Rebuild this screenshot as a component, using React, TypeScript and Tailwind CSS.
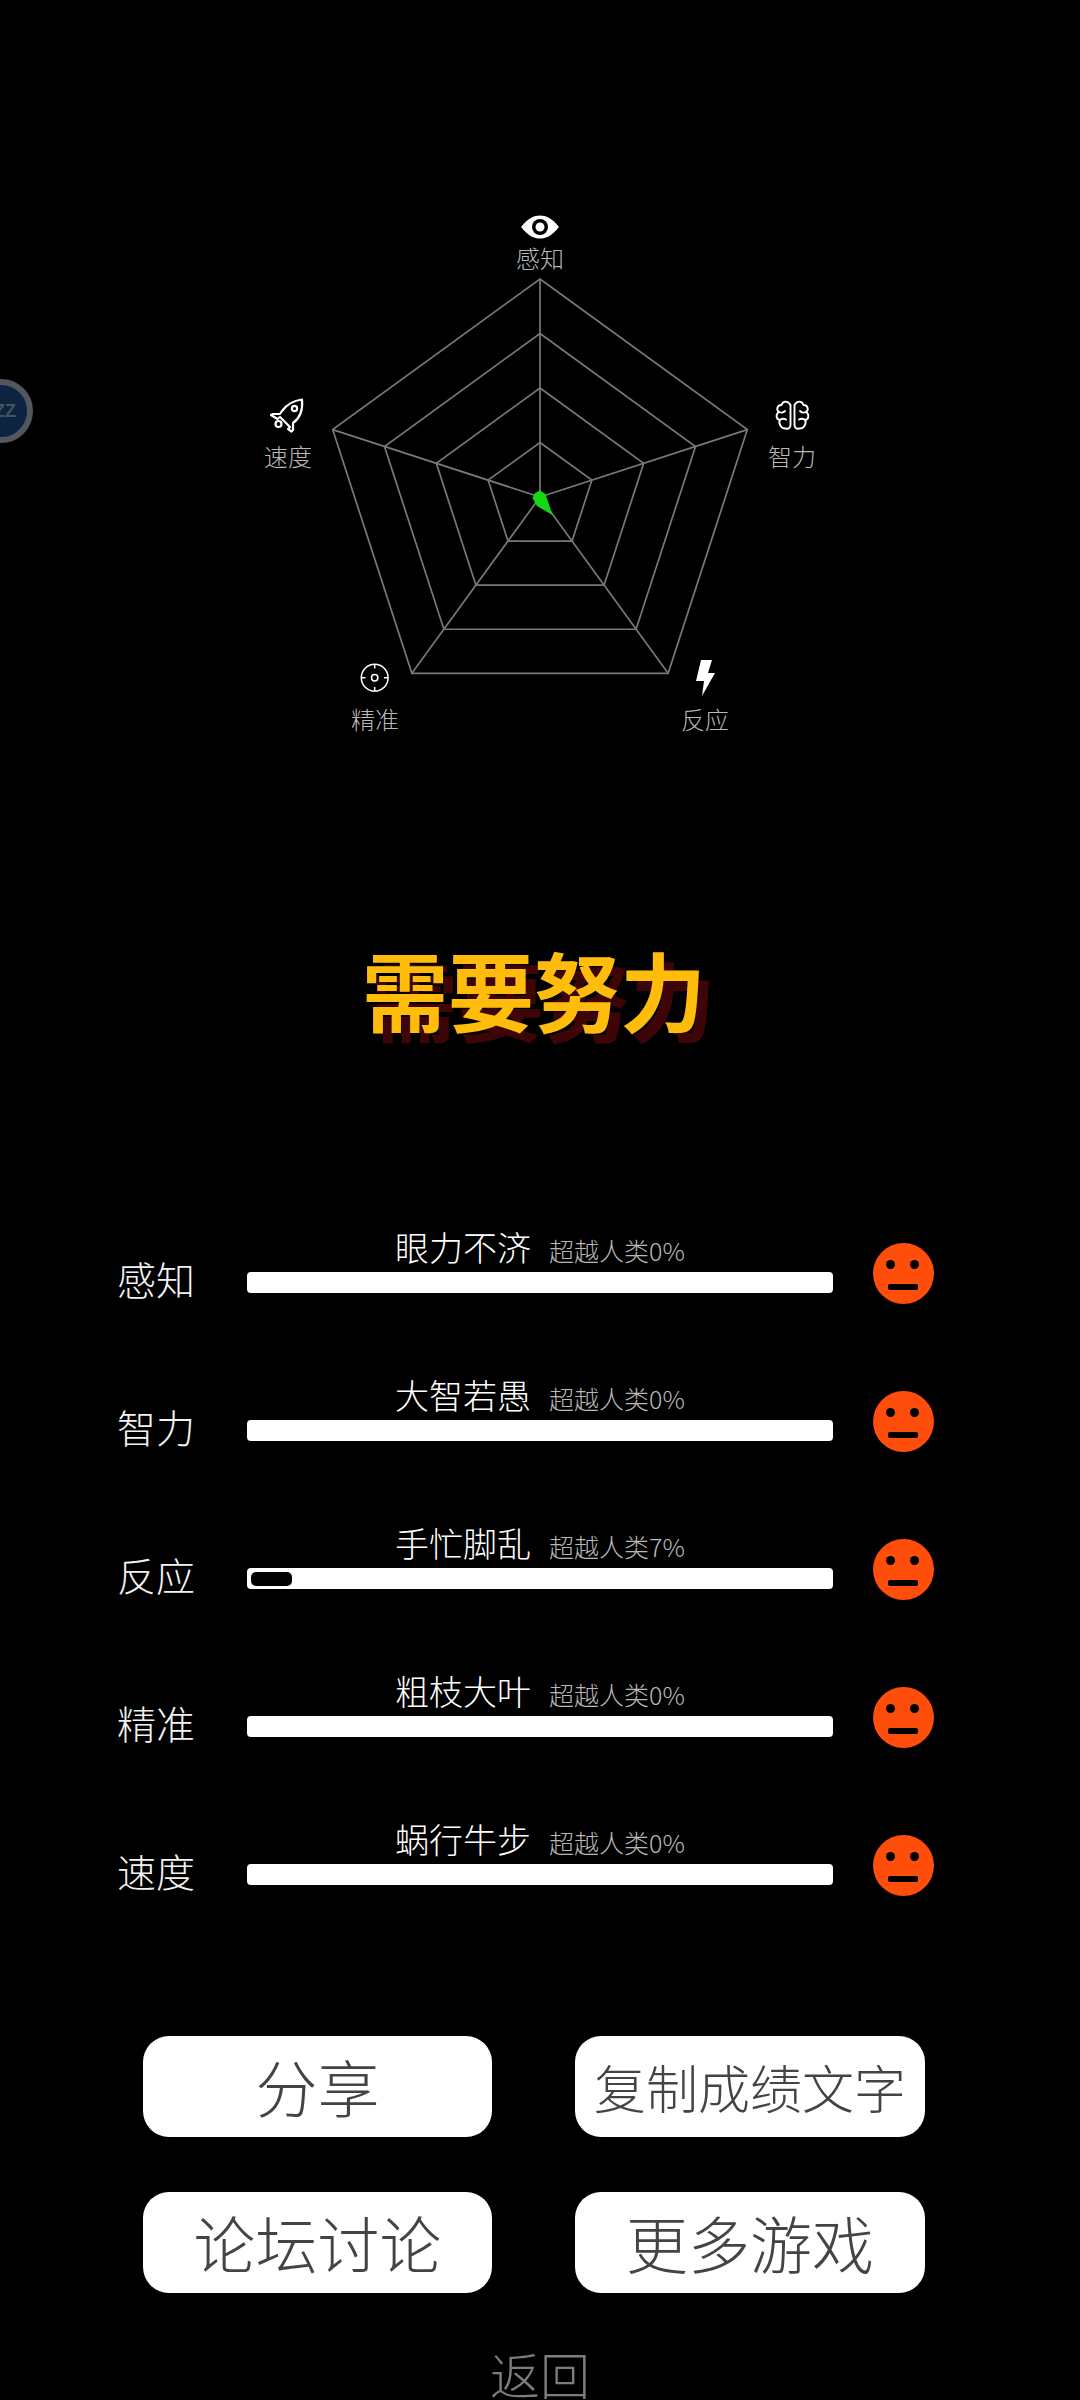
const CJK = "[font-family:'Noto_Sans_CJK_SC','Noto_Sans',sans-serif]";

const cx = 300;
const cy = 307;
const R = 218;
const pt = (i: number, r: number) => {
  const a = (-90 + i * 72) * (Math.PI / 180);
  return [cx + r * Math.cos(a), cy + r * Math.sin(a)];
};

function Radar() {
  const rings = [0.25, 0.5, 0.75, 1];
  return (
    <svg className="absolute inset-0" width="600" height="560" viewBox="0 0 600 560">
      {rings.map((f) => (
        <polygon
          key={f}
          points={[0, 1, 2, 3, 4].map((i) => pt(i, R * f).join(",")).join(" ")}
          fill="none"
          stroke="#787878"
          strokeWidth="1.7"
        />
      ))}
      {[0, 1, 2, 3, 4].map((i) => {
        const [x, y] = pt(i, R);
        return <line key={i} x1={cx} y1={cy} x2={x} y2={y} stroke="#787878" strokeWidth="1.7" />;
      })}
      <polygon points="300,300.5 305.5,304 312.5,325 297,316 292.5,308 295,303" fill="#14d814" />
    </svg>
  );
}

function Eye() {
  return (
    <svg className="absolute left-[280px] top-[24px]" width="40" height="26" viewBox="0 0 40 26">
      <path d="M1 13 C8 4 14 1.5 20 1.5 C26 1.5 32 4 39 13 C32 22 26 24.5 20 24.5 C14 24.5 8 22 1 13 Z" fill="#fff" />
      <circle cx="20" cy="13" r="8" fill="#000" />
      <circle cx="20" cy="13" r="4.5" fill="#fff" />
    </svg>
  );
}

function RocketIcon() {
  return (
    <svg className="absolute left-[10px] top-[195px]" width="90" height="90" viewBox="0 0 90 90" fill="none" stroke="#fff" strokeWidth="2.2" strokeLinejoin="round" strokeLinecap="round">
      <path d="M53 14.5 C45 15.5 38 19 33 26 L31 29 L24 29 L22 30 L28.5 34 L31 32 L41 42 L39 44 L42.5 46.5 L44 45 L44 38 C51 33 54 25 53 14.5 Z" transform="translate(-1 0)" />
      <circle cx="44.5" cy="23.5" r="2.6" />
      <circle cx="28.5" cy="39" r="3" />
    </svg>
  );
}

function BrainIcon() {
  return (
    <svg className="absolute left-[510px] top-[195px]" width="90" height="90" viewBox="0 0 90 90" fill="none" stroke="#fff" strokeWidth="1.9" strokeLinecap="round" strokeLinejoin="round">
      <path d="M40.5 20 C38 15.5 33 15.5 31.5 20 C27 20 26 25 29 27 C25.5 29 26 34 29.5 35 C28.5 40 32 44 36 43.5 C38.5 44.5 40.5 42.5 40.5 40 Z" />
      <path d="M44.5 20 C47 15.5 52 15.5 53.5 20 C58 20 59 25 56 27 C59.5 29 59 34 55.5 35 C56.5 40 53 44 49 43.5 C46.5 44.5 44.5 42.5 44.5 40 Z" />
      <path d="M29 27 C31 28 33.5 27.5 35 26" />
      <path d="M56 27 C54 28 51.5 27.5 50 26" />
      <path d="M30 35 C32 33.5 34 33.5 36 34.5" />
      <path d="M55 35 C53 33.5 51 33.5 49 34.5" />
    </svg>
  );
}

function TargetIcon() {
  return (
    <svg className="absolute left-[100px] top-[460px]" width="90" height="90" viewBox="0 0 90 90" fill="none" stroke="#fff" strokeWidth="1.5">
      <circle cx="34.7" cy="27.7" r="13.4" />
      <circle cx="34.7" cy="27.7" r="3.2" />
      <path d="M34.7 14.5 V18.5 M34.7 37 V41 M21.5 27.7 H25.5 M44 27.7 H48" />
    </svg>
  );
}

function BoltIcon() {
  return (
    <svg className="absolute left-[430px] top-[460px]" width="90" height="90" viewBox="0 0 90 90">
      <polygon points="31,10 42,10 38,23 45,23 32,46 34,31 26,31" fill="#fff" />
    </svg>
  );
}

const axisLabels = [
  { t: "感知", c: "left-[276px] top-[56px]" },
  { t: "智力", c: "left-[528px] top-[254px]" },
  { t: "反应", c: "left-[441px] top-[517px]" },
  { t: "精准", c: "left-[111px] top-[517px]" },
  { t: "速度", c: "left-[24px] top-[254px]" },
];

function Face() {
  return (
    <div className="relative mt-[8px] h-[61px] w-[61px] rounded-full bg-[#ff4e0c]">
      <div className="absolute left-[13px] top-[17px] h-[9px] w-[9px] rounded-full bg-black" />
      <div className="absolute left-[37px] top-[17px] h-[9px] w-[9px] rounded-full bg-black" />
      <div className="absolute left-[15px] top-[41px] h-[6px] w-[30px] rounded-[2px] bg-black" />
    </div>
  );
}

const rows = [
  { k: "感知", n: "眼力不济", p: 0 },
  { k: "智力", n: "大智若愚", p: 0 },
  { k: "反应", n: "手忙脚乱", p: 7 },
  { k: "精准", n: "粗枝大叶", p: 0 },
  { k: "速度", n: "蜗行牛步", p: 0 },
];

function Row({ k, n, p }: { k: string; n: string; p: number }) {
  return (
    <div className="flex h-[148px] items-start pl-[117px]">
      <div className="mt-[24px] w-[130px] text-[39px] leading-[38px] text-[#f2f2f2] font-extralight">{k}</div>
      <div className="w-[586px]">
        <div className="flex h-[37px] items-start justify-center gap-[18px]">
          <span className="mt-[-7px] text-[34px] leading-[37px] text-white font-extralight">{n}</span>
          <span className="mt-[-3px] text-[25px] leading-[37px] text-[#b8b8b8] font-extralight">超越人类{p}%</span>
        </div>
        <div className="h-[21px] rounded-[4px] bg-white p-[4px]">
          {p > 0 && <div className="h-[14px] w-[41px] rounded-[5px] bg-black" />}
        </div>
      </div>
      <div className="ml-[40px]">
        <Face />
      </div>
    </div>
  );
}

function Btn({ t, small }: { t: string; small?: boolean }) {
  return (
    <div className={`flex h-[101px] items-center justify-center rounded-[26px] bg-white text-[#444] font-extralight whitespace-nowrap ${small ? "text-[52px]" : "text-[62px]"}`}>
      {t}
    </div>
  );
}

export default function App() {
  return (
    <div className={`relative flex h-[2400px] w-[1080px] flex-col overflow-hidden bg-black ${CJK}`}>
      {/* floating ball */}
      <div className="absolute left-[-31px] top-[379px] flex h-[64px] w-[64px] items-center justify-end rounded-full border-[6px] border-[#51575c] bg-[#0c2440] pr-[11px] text-[18px] font-bold text-[#44525e]">
        <span className="[font-family:'Liberation_Sans',sans-serif]">ZZ</span>
      </div>

      <div className="relative mx-auto mt-[190px] h-[560px] w-[600px] shrink-0">
        <Radar />
        <Eye />
        <RocketIcon />
        <BrainIcon />
        <TargetIcon />
        <BoltIcon />
        {axisLabels.map((l) => (
          <div key={l.t} className={`absolute text-[24px] leading-[24px] text-[#b8b8b8] font-extralight ${l.c}`}>
            {l.t}
          </div>
        ))}
      </div>

      <div className="mt-[179px] flex h-[120px] items-center justify-center pr-[12px] text-[86px] font-bold leading-[120px] text-[#ffbc0a] [text-shadow:10px_10px_0_#3d0505]">
        需要努力
      </div>

      <div className="mt-[186px] flex flex-col">
        {rows.map((r) => (
          <Row key={r.k} {...r} />
        ))}
      </div>

      <div className="ml-[143px] mt-[61px] grid w-[782px] grid-cols-[349px_350px] gap-x-[83px] gap-y-[55px]">
        <Btn t="分享" />
        <Btn t="复制成绩文字" small />
        <Btn t="论坛讨论" />
        <Btn t="更多游戏" />
      </div>

      <div className="mt-[50px] text-center text-[50px] leading-[60px] text-[#7d7d7d] font-extralight">返回</div>
    </div>
  );
}
